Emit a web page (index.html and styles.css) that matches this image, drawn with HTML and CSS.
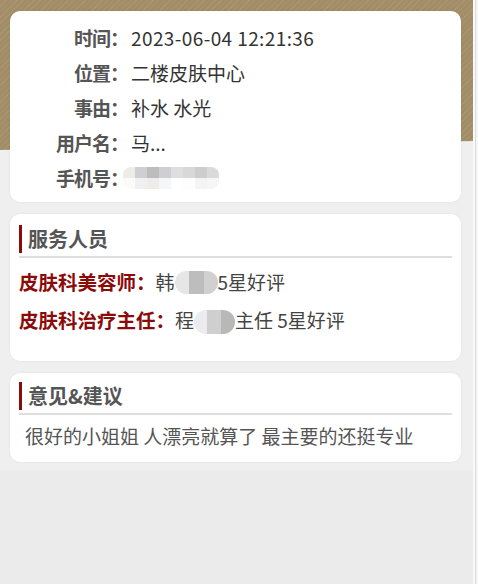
FILE: index.html
```html
<!DOCTYPE html>
<html lang="zh">
<head>
<meta charset="utf-8">
<link rel="stylesheet" href="styles.css">
</head>
<body>
<div class="frame">
  <main class="page">
    <div class="bg-top"></div>
    <section class="card info">
      <div class="row"><span class="lbl">时间：</span><span class="val">2023-06-04 12:21:36</span></div>
      <div class="row"><span class="lbl">位置：</span><span class="val">二楼皮肤中心</span></div>
      <div class="row"><span class="lbl">事由：</span><span class="val">补水 水光</span></div>
      <div class="row"><span class="lbl">用户名：</span><span class="val">马...</span></div>
      <div class="row"><span class="lbl">手机号：</span><span class="val"><span class="mosaic phone"><i></i><i></i><i></i><i></i><i></i><i></i><i></i><i></i><i></i><i></i><i></i><i></i><i></i><i></i><i></i><i></i></span></span></div>
    </section>

    <section class="card staff">
      <h2 class="title">服务人员</h2>
      <div class="srow"><span class="slbl">皮肤科美容师：</span><span class="sval">韩<span class="mosaic m1"><i></i><i></i><i></i></span>5星好评</span></div>
      <div class="srow"><span class="slbl">皮肤科治疗主任：</span><span class="sval">程<span class="mosaic m2"><i></i><i></i><i></i></span>主任 5星好评</span></div>
    </section>

    <section class="card advice">
      <h2 class="title">意见&amp;建议</h2>
      <p class="text">很好的小姐姐 人漂亮就算了 最主要的还挺专业</p>
    </section>
  </main>
  <div class="scroll"></div>
</div>
</body>
</html>
```

FILE: styles.css
```css
* { box-sizing: border-box; }
html, body {
  margin: 0;
  padding: 0;
  background: #ebebeb;
  font-family: "Noto Sans CJK SC", "Noto Sans", sans-serif;
}
.frame {
  display: flex;
  width: 478px;
  height: 584px;
  overflow: hidden;
}
.page {
  position: relative;
  flex: 1;
  padding: 11px 12px 8px 10px;
  display: flex;
  flex-direction: column;
  gap: 12px;
  background: linear-gradient(#efefef, #efefef) top / 100% 470px no-repeat, #ebebeb;
  overflow: hidden;
}
.bg-top {
  position: absolute;
  left: 0;
  right: 0;
  top: 0;
  height: 152px;
  background:
    repeating-linear-gradient(135deg, rgba(255,255,255,0.07) 0 1px, rgba(0,0,0,0) 1px 4px),
    #a28d67;
  clip-path: polygon(0 0, 100% 0, 100% 141px, 50% 146px, 0 150px);
  z-index: 0;
}
.scroll {
  width: 5px;
  background: #f3f3f3;
  border-left: 2px solid #fafafa;
  border-right: 1px solid #f6f6f6;
  box-shadow: inset 1px 0 0 #dcdcdc;
}
.card {
  position: relative;
  z-index: 1;
  background: #fff;
  border-radius: 10px;
  box-shadow: 0 0 3px rgba(0,0,0,0.06);
}
.info {
  height: 191px;
  padding: 9px 0 0 0;
  display: flex;
  flex-direction: column;
}
.row {
  display: flex;
  align-items: center;
  height: 35px;
  font-size: 19px;
}
.lbl {
  width: 118px;
  text-align: right;
  font-weight: bold;
  color: #555;
  letter-spacing: -1px;
}
.val {
  margin-left: 3px;
  color: #333;
  display: flex;
  align-items: center;
}
.info .row:first-child .val { letter-spacing: 0.4px; }
.mosaic {
  display: inline-grid;
  filter: blur(0.7px);
  border-radius: 8px;
  overflow: hidden;
}
.mosaic i { display: block; }
.phone {
  grid-template-columns: repeat(8, 12px);
  grid-template-rows: 11px 11px;
  margin-left: -8px;
  margin-top: 0;
}
.phone i:nth-child(1) { background: #efebe6; }
.phone i:nth-child(2) { background: #cfcfd3; }
.phone i:nth-child(3) { background: #bdbdbd; }
.phone i:nth-child(4) { background: #cfcfd3; }
.phone i:nth-child(5) { background: #dedede; }
.phone i:nth-child(6) { background: #d8d8d8; }
.phone i:nth-child(7) { background: #cdcdcd; }
.phone i:nth-child(8) { background: #dadada; }
.phone i:nth-child(9) { background: #fbfaf8; }
.phone i:nth-child(10) { background: #eff0f2; }
.phone i:nth-child(11) { background: #efedeb; }
.phone i:nth-child(12) { background: #f5f6f8; }
.phone i:nth-child(13) { background: #ffffff; }
.phone i:nth-child(14) { background: #fdfdfd; }
.phone i:nth-child(15) { background: #f4f4f4; }
.phone i:nth-child(16) { background: #f6f6f6; }

.staff {
  height: 147px;
  padding: 11px 9px 0 9px;
}
.advice {
  height: 89px;
  padding: 9px 9px 0 9px;
}
.title {
  margin: 0;
  font-size: 20px;
  font-weight: bold;
  color: #555;
  line-height: 28px;
  border-left: 3px solid #8b0a0a;
  padding-left: 6px;
  position: relative;
  margin-bottom: 4px;
}
.title::after {
  content: "";
  display: block;
  position: absolute;
  left: -3px;
  right: 0;
  bottom: -5px;
  height: 2px;
  background: #dedede;
}
.staff .title { margin-bottom: 9px; }
.srow {
  display: flex;
  align-items: center;
  height: 38px;
  font-size: 19px;
}
.slbl {
  font-weight: bold;
  color: #8b0a0a;
  font-size: 19.5px;
}
.sval {
  color: #444;
  display: flex;
  align-items: center;
}
.m1 {
  grid-template-columns: 14px 15px 14px;
  grid-template-rows: 23px;
  border-radius: 12px;
  margin-top: 2px;
}
.m1 i:nth-child(1) { background: #e6e6e6; }
.m1 i:nth-child(2) { background: #bdbdbd; }
.m1 i:nth-child(3) { background: #d0d0d0; }
.m2 {
  grid-template-columns: 13px 14px 14px;
  grid-template-rows: 24px;
  border-radius: 12px;
  margin-top: 6px;
}
.m2 i:nth-child(1) { background: #ececee; }
.m2 i:nth-child(2) { background: #d0cfcf; }
.m2 i:nth-child(3) { background: #b8b8b8; }
.text {
  margin: 14px 0 0 6px;
  font-size: 19px;
  color: #555;
  line-height: 24px;
  white-space: nowrap;
}
```
